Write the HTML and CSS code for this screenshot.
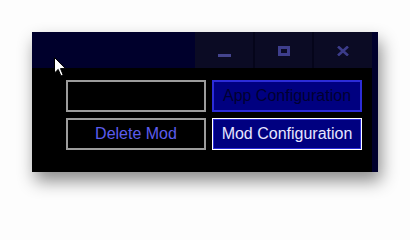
FILE: index.html
```html
<!DOCTYPE html>
<html>
<head>
<meta charset="utf-8">
<link rel="stylesheet" href="styles.css">
</head>
<body>
<div class="stage">
  <div class="window">
    <div class="titlebar">
      <div class="title-fill"></div>
      <div class="controls">
        <div class="ctl ctl-min"><span class="min-bar"></span></div>
        <div class="sep"></div>
        <div class="ctl ctl-max"><span class="max-box"></span></div>
        <div class="sep"></div>
        <div class="ctl ctl-close">
          <svg width="12" height="10" viewBox="0 0 12 10"><path d="M1 0.5 L11 9.5 M11 0.5 L1 9.5" stroke="#3c3c8a" stroke-width="2.6" fill="none"/></svg>
        </div>
      </div>
    </div>
    <div class="content">
      <div class="textbox"></div>
      <button class="btn btn-app">App Configuration</button>
      <button class="btn btn-delete">Delete Mod</button>
      <button class="btn btn-mod">Mod Configuration</button>
    </div>
  </div>
  <svg class="cursor" width="13" height="21" viewBox="0 0 13 21"><path d="M0.5 0.5 L0.5 16 L4.2 12.4 L7 19 L9.2 18 L6.5 11.6 L11.5 11.6 Z" fill="#ffffff" stroke="#000" stroke-width="1"/></svg>
</div>
</body>
</html>
```

FILE: styles.css
```css
html, body {
  margin: 0;
  padding: 0;
  background: #fdfdfd;
}
.stage {
  position: relative;
  width: 410px;
  height: 204px;
  padding: 32px 0 0 32px;
  box-sizing: border-box;
  font-family: "Liberation Sans", Arial, sans-serif;
}
.window {
  width: 346px;
  height: 140px;
  background: #00002c;
  padding-right: 6px;
  box-sizing: border-box;
  display: flex;
  flex-direction: column;
  box-shadow: 3px 9px 16px rgba(0, 0, 0, 0.45);
}
.titlebar {
  height: 36px;
  display: flex;
}
.title-fill {
  flex: 1;
}
.controls {
  display: flex;
  width: 177px;
  background: #0b0b24;
}
.ctl {
  display: flex;
  align-items: center;
  justify-content: center;
  width: 58px;
  padding-top: 2px;
  box-sizing: border-box;
}
.ctl-max {
  width: 57px;
}
.sep {
  width: 2px;
  background: #05051a;
}
.min-bar {
  display: block;
  width: 13px;
  height: 3px;
  margin-top: 9px;
  background: #44448e;
}
.max-box {
  display: block;
  width: 12px;
  height: 10px;
  border: 3px solid #3e3e8c;
  box-sizing: border-box;
}
.content {
  flex: 1;
  background: #000000;
  display: grid;
  grid-template-columns: 140px 150px;
  grid-template-rows: 32px 32px;
  column-gap: 6px;
  row-gap: 6px;
  padding: 12px 0 0 34px;
  align-content: start;
}
.textbox {
  border: 2px solid #9c9c9c;
  background: #000;
}
.btn {
  margin: 0;
  padding: 0;
  font-family: "Liberation Sans", Arial, sans-serif;
  font-size: 16px;
  line-height: 1;
  cursor: default;
}
.btn-delete {
  background: #000;
  border: 2px solid #9c9c9c;
  color: #5c5cec;
}
.btn-app {
  background: #000080;
  border: 2px solid #2c2cd8;
  color: #000030;
}
.btn-mod {
  background: #000080;
  border: 2px solid #2c2cd8;
  outline: 1px solid #ffffff;
  outline-offset: -1px;
  color: #e6e6ff;
}
.cursor {
  position: absolute;
  left: 54px;
  top: 57px;
}
```
